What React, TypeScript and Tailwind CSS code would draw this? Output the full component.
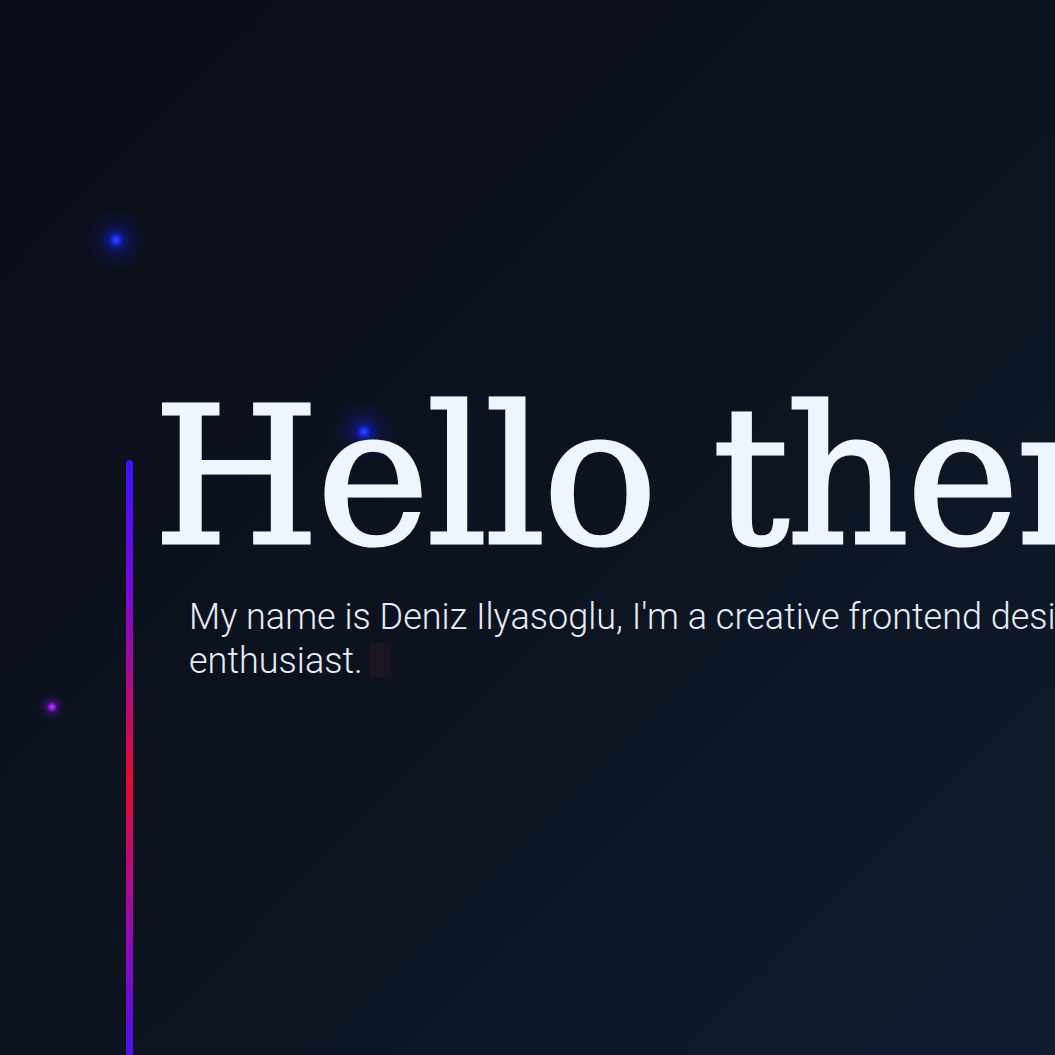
import type React from "react";

const Glow: React.FC<{ className: string }> = ({ className }) => (
    <span className={`absolute block rounded-full ${className}`}></span>
);

export default function App() {
    return (
        <div className="relative h-[1055px] w-[1055px] overflow-hidden bg-gradient-to-br from-[#0a0d17] via-[#0c131f] to-[#0f1c2e]">
            {/* background glow dots */}
            <Glow className="top-[210px] left-[86px] h-[60px] w-[60px] bg-[radial-gradient(circle,#3a4aff_0,#1c2cf0_3px,rgba(20,35,230,0.5)_7px,rgba(20,30,210,0.25)_13px,rgba(20,30,190,0.12)_20px,rgba(20,30,170,0.06)_28px,transparent_30px)]" />
            <Glow className="top-[402px] left-[334px] h-[60px] w-[60px] bg-[radial-gradient(circle,#3a4aff_0,#1c2cf0_3px,rgba(20,35,230,0.5)_7px,rgba(20,30,210,0.25)_13px,rgba(20,30,190,0.12)_20px,rgba(20,30,170,0.06)_28px,transparent_30px)]" />
            <Glow className="top-[693px] left-[38px] h-[28px] w-[28px] bg-[radial-gradient(circle,#c43cff_0,#9a1ff0_2px,rgba(130,20,220,0.35)_5px,rgba(110,20,200,0.1)_10px,transparent_14px)]" />

            <div className="relative flex h-full pt-[382px] pl-[126px]">
                <div className="mt-[78px] w-[7px] shrink-0 self-stretch rounded-t-full bg-[linear-gradient(to_bottom,#3d10ff_0%,#7a0ad8_22%,#e80a30_54%,#9a0ab0_78%,#4c10e8_100%)]"></div>
                <div className="ml-[20px] flex flex-col">
                    <h1 className="font-['DejaVu_Serif',serif] text-[191px] leading-none tracking-[-3px] whitespace-nowrap text-[#eef5ff] [-webkit-text-stroke:3px_#eef5ff]">
                        Hello there!
                    </h1>
                    <p className="mt-[22px] ml-[36px] w-[1150px] font-['Roboto',sans-serif] text-[36px] leading-[44px] font-light text-[#e6edf6]">
                        My name is Deniz Ilyasoglu, I'm a creative frontend designer and web enthusiast.
                        <span className="ml-[7px] inline-block h-[34px] w-[21px] translate-y-[4px] bg-[#2a1624]/60"></span>
                    </p>
                </div>
            </div>
        </div>
    );
}
